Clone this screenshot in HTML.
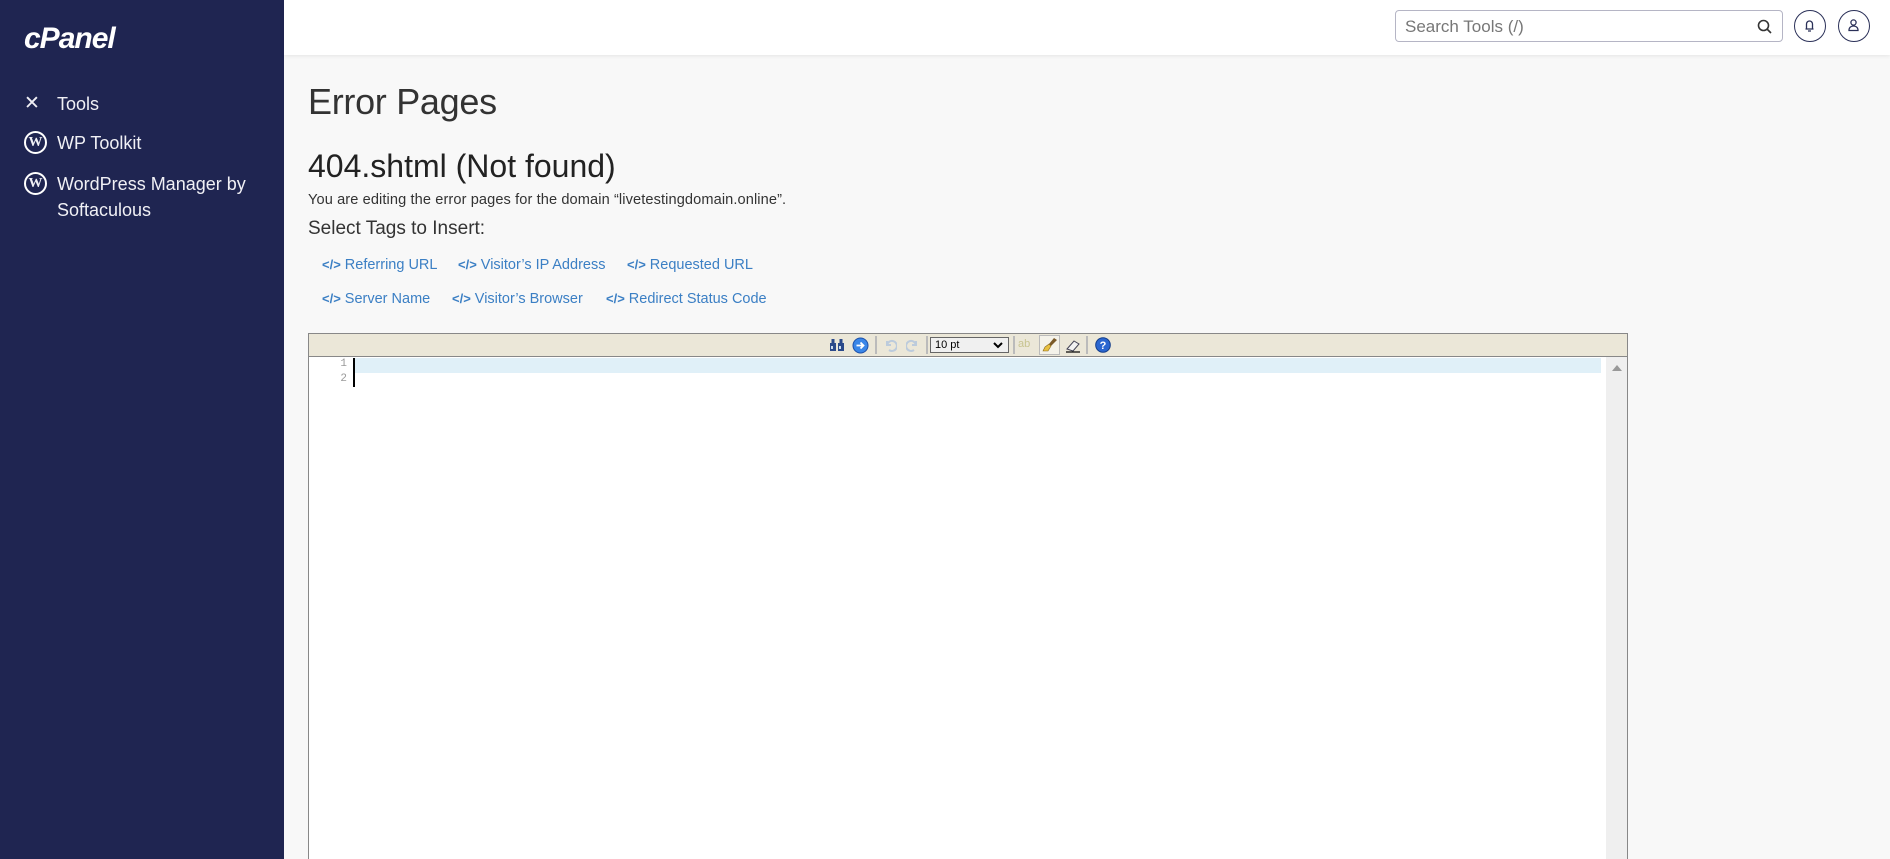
<!DOCTYPE html>
<html style="overflow:hidden"><head><meta charset="utf-8"><style>
*{box-sizing:border-box;margin:0;padding:0}
html,body{width:1890px;height:859px;overflow:hidden}
body{background:#f8f8f8;font-family:"Liberation Sans",sans-serif;position:relative}
#side{position:absolute;left:0;top:0;width:284px;height:859px;background:#1f2551;color:#fff}
.logo{position:absolute;left:24px;top:22px;font-size:30px;font-weight:bold;font-style:italic;letter-spacing:-1px;color:#fff}
.nav{position:absolute;left:24px;font-size:18px;color:#f0f0f5;display:flex;align-items:flex-start;gap:10px;line-height:26px}
.wp{width:23px;height:23px;border-radius:50%;border:2px solid #fff;display:inline-flex;align-items:center;justify-content:center;font-size:14px;font-weight:bold;font-family:"Liberation Serif",serif;margin-top:1px}
#top{position:absolute;left:284px;top:0;right:0;height:55px;background:#fff;box-shadow:0 1px 4px rgba(0,0,0,.08)}
.search{position:absolute;left:1395px;top:10px;width:388px;height:32px;border:1px solid #b5b5c5;border-radius:4px;background:#fff;font-size:17px;color:#777;padding:6px 9px}
.circ{position:absolute;top:10px;width:32px;height:32px;border:1.5px solid #2a3058;border-radius:50%}
h1{position:absolute;left:308px;top:81px;font-size:36px;font-weight:normal;color:#333;letter-spacing:-0.3px}
h2{position:absolute;left:308px;top:148px;font-size:32px;font-weight:normal;color:#222}
.desc{position:absolute;left:308px;top:192px;font-size:14.6px;color:#333;letter-spacing:0.1px}
.sel{position:absolute;left:308px;top:218px;font-size:19px;color:#333}
.tag{position:absolute;font-size:14.5px;color:#3b7fc4}
.tag b{font-size:13px;margin-right:4px}
#ed{position:absolute;left:308px;top:333px;width:1320px;height:540px;border:1px solid #888;background:#fff}
#tb{height:23px;background:#ebe7d8;border-bottom:1px solid #888;position:relative}
#tb>*{position:absolute}
.sp{top:2px;width:2px;height:18px;background:#bbb}
#gut{position:absolute;left:0;top:23px;width:44px;bottom:0;font-family:"Liberation Mono",monospace;font-size:11px;color:#999;text-align:right}
#cur{position:absolute;left:44px;top:24px;width:1.5px;height:29px;background:#000}
#hl{position:absolute;left:46px;top:24px;width:1246px;height:15px;background:#e0f0f8}
#sb{position:absolute;right:0;top:23px;width:21px;bottom:0;background:#efefef}
</style></head><body>
<div id="side">
<div class="logo">cPanel</div>
<div class="nav" style="top:91px"><span style="font-size:19px;width:23px">✕</span>Tools</div>
<div class="nav" style="top:130px"><span class="wp">W</span>WP Toolkit</div>
<div class="nav" style="top:171px"><span class="wp">W</span><span>WordPress Manager by<br>Softaculous</span></div>
</div>
<div id="top"></div>
<div class="search">Search Tools (/)<svg style="position:absolute;right:10px;top:8px" width="15" height="15" viewBox="0 0 15 15"><circle cx="6.5" cy="6.5" r="5" fill="none" stroke="#333" stroke-width="1.6"/><path d="M10 10l4 4" stroke="#333" stroke-width="1.6"/></svg></div>
<div class="circ" style="left:1794px"><svg width="29" height="29" viewBox="0 0 29 29"><path d="M10.5 18h8M11.5 18v-5a3 3 0 0 1 6 0v5M13 20h3" fill="none" stroke="#2a3058" stroke-width="1.3"/></svg></div>
<div class="circ" style="left:1838px"><svg width="29" height="29" viewBox="0 0 29 29"><circle cx="14.5" cy="11.5" r="2.6" fill="none" stroke="#2a3058" stroke-width="1.3"/><path d="M10 19.5c0-3 2-4.5 4.5-4.5s4.5 1.5 4.5 4.5z" fill="none" stroke="#2a3058" stroke-width="1.3"/></svg></div>
<h1>Error Pages</h1>
<h2>404.shtml (Not found)</h2>
<div class="desc">You are editing the error pages for the domain “livetestingdomain.online”.</div>
<div class="sel">Select Tags to Insert:</div>
<div class="tag" style="left:322px;top:257px"><b>&lt;/&gt;</b>Referring URL</div>
<div class="tag" style="left:458px;top:257px"><b>&lt;/&gt;</b>Visitor’s IP Address</div>
<div class="tag" style="left:627px;top:257px"><b>&lt;/&gt;</b>Requested URL</div>
<div class="tag" style="left:322px;top:291px"><b>&lt;/&gt;</b>Server Name</div>
<div class="tag" style="left:452px;top:291px"><b>&lt;/&gt;</b>Visitor’s Browser</div>
<div class="tag" style="left:606px;top:291px"><b>&lt;/&gt;</b>Redirect Status Code</div>
<div id="ed" style="height:527px">
<div id="tb">
<svg style="left:520px;top:4px" width="16" height="14" viewBox="0 0 16 14"><rect x="1" y="5" width="6" height="8" fill="#2b4a8a"/><rect x="9" y="5" width="6" height="8" fill="#2b4a8a"/><rect x="2.5" y="1" width="3" height="5" fill="#2b4a8a"/><rect x="10.5" y="1" width="3" height="5" fill="#2b4a8a"/><rect x="2" y="8" width="2" height="3" fill="#cde"/><rect x="10" y="8" width="2" height="3" fill="#cde"/></svg>
<svg style="left:543px;top:3px" width="17" height="17" viewBox="0 0 17 17"><circle cx="8.5" cy="8.5" r="7.5" fill="#3a86e8" stroke="#1c4fa8"/><path d="M4.5 8.5h7M8.5 5.5l3 3-3 3" fill="none" stroke="#fff" stroke-width="1.8"/></svg>
<span class="sp" style="left:566px"></span>
<svg style="left:574px;top:4px" width="14" height="14" viewBox="0 0 14 14"><path d="M4 3v4h4M4 7a5 5 0 1 1 2 5" fill="none" stroke="#bccbdc" stroke-width="2"/></svg>
<svg style="left:597px;top:4px" width="14" height="14" viewBox="0 0 14 14"><path d="M10 3v4H6M10 7a5 5 0 1 0-2 5" fill="none" stroke="#bccbdc" stroke-width="2"/></svg>
<span class="sp" style="left:617px"></span>
<span style="left:621px;top:3px;width:79px;height:16px;border:1px solid #666;background:#f0f0f0;font-size:11px;padding-left:4px;line-height:14px">10 pt<svg style="position:absolute;right:5px;top:4px" width="10" height="7" viewBox="0 0 10 7"><path d="M1 1l4 4 4-4" fill="none" stroke="#000" stroke-width="2"/></svg></span>
<span class="sp" style="left:704px"></span>
<span style="left:709px;top:4px;font-size:11px;color:#c8c490">ab</span>
<span style="left:730px;top:1px;width:21px;height:20px;border:1px solid #bbb;background:#f4f2ea"><svg width="19" height="18" viewBox="0 0 19 18"><path d="M14 2l3 2-6 6-2-2z" fill="#7a5a2a"/><path d="M9 8l2 2-3 5-5 0 2-4z" fill="#e8c040" stroke="#8a6a20" stroke-width=".6"/></svg></span>
<svg style="left:755px;top:3px" width="17" height="17" viewBox="0 0 17 17"><path d="M3 12l7-8 5 3-6 7z" fill="#f2f2f2" stroke="#445" stroke-width="1"/><path d="M2 15h14" stroke="#000" stroke-width="1.2"/></svg>
<span class="sp" style="left:777px"></span>
<svg style="left:786px;top:3px" width="16" height="16" viewBox="0 0 16 16"><circle cx="8" cy="8" r="7.3" fill="#2a66d0" stroke="#133d8a"/><text x="8" y="12" font-size="11" font-weight="bold" fill="#fff" text-anchor="middle" font-family="Liberation Sans">?</text></svg>
</div>
<div id="gut"><div style="height:15px;line-height:15px;padding-right:6px">1</div><div style="height:15px;line-height:15px;padding-right:6px">2</div></div>
<div id="hl"></div><div id="cur"></div>
<div id="sb"><div style="margin:8px auto 0;width:0;height:0;border-left:5px solid transparent;border-right:5px solid transparent;border-bottom:6px solid #999"></div></div>
</div>
</body></html>
